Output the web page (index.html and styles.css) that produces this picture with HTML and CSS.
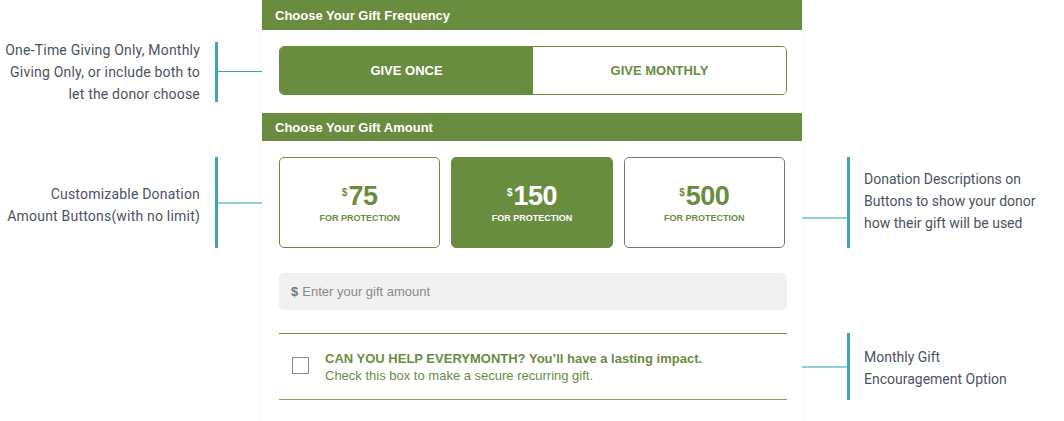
FILE: index.html
```html
<!DOCTYPE html>
<html lang="en">
<head>
<meta charset="utf-8">
<title>Donation form annotations</title>
<link rel="stylesheet" href="styles.css">
</head>
<body>
<div class="page">
  <div class="panel"></div>

  <div class="form-header row-1">Choose Your Gift Frequency</div>

  <div class="note note-left row-2">
    <p class="note-text">One-Time Giving Only, Monthly<br>Giving Only, or include both to<br>let the donor choose</p>
    <div class="connector conn-1">
      <span class="bar"></span><span class="line line-dark"></span>
    </div>
  </div>
  <div class="freq row-2">
    <div class="toggle">
      <div class="toggle-opt active">GIVE ONCE</div>
      <div class="toggle-opt">GIVE MONTHLY</div>
    </div>
  </div>

  <div class="form-header row-3">Choose Your Gift Amount</div>

  <div class="note note-left row-4 pad-amounts">
    <p class="note-text text-low">Customizable Donation<br>Amount Buttons(with no limit)</p>
    <div class="connector conn-2">
      <span class="bar"></span><span class="line"></span>
    </div>
  </div>
  <div class="amounts row-4">
    <div class="amount amount-outline">
      <div class="amount-value"><span class="cur">$</span>75</div>
      <div class="amount-label">FOR PROTECTION</div>
    </div>
    <div class="amount amount-active">
      <div class="amount-value"><span class="cur">$</span>150</div>
      <div class="amount-label">FOR PROTECTION</div>
    </div>
    <div class="amount amount-gray">
      <div class="amount-value"><span class="cur">$</span>500</div>
      <div class="amount-label">FOR PROTECTION</div>
    </div>
  </div>
  <div class="note note-right row-4 pad-amounts">
    <div class="connector conn-2 conn-low">
      <span class="line"></span><span class="bar"></span>
    </div>
    <p class="note-text text-high">Donation Descriptions on<br>Buttons to show your donor<br>how their gift will be used</p>
  </div>

  <div class="custom row-5">
    <div class="custom-input"><b>$</b> Enter your gift amount</div>
  </div>

  <div class="monthly row-6">
    <div class="monthly-box">
      <span class="checkbox"></span>
      <div class="monthly-text">
        <div class="monthly-title">CAN YOU HELP EVERYMONTH? You’ll have a lasting impact.</div>
        <div>Check this box to make a secure recurring gift.</div>
      </div>
    </div>
  </div>
  <div class="note note-right row-6 pad-monthly">
    <div class="connector conn-4">
      <span class="line"></span><span class="bar"></span>
    </div>
    <p class="note-text">Monthly Gift<br>Encouragement Option</p>
  </div>

  <div class="tail row-7"></div>
</div>
</body>
</html>
```

FILE: styles.css
```css
* { box-sizing: border-box; }

html, body {
  margin: 0;
  padding: 0;
  background: #ffffff;
}

body {
  font-family: "Liberation Sans", Arial, sans-serif;
  overflow: hidden;
}

.page {
  display: grid;
  grid-template-columns: 262px 540px 262px;
  grid-template-rows: 30px 83px 28px auto auto auto 30px;
  width: 1064px;
}

.panel {
  grid-column: 2;
  grid-row: 1 / -1;
  background: #ffffff;
  box-shadow: 0 0 6px rgba(0, 0, 0, 0.035);
}

.row-1 { grid-row: 1; }
.row-2 { grid-row: 2; }
.row-3 { grid-row: 3; }
.row-4 { grid-row: 4; }
.row-5 { grid-row: 5; }
.row-6 { grid-row: 6; }
.row-7 { grid-row: 7; }

.form-header,
.freq,
.amounts,
.custom,
.monthly,
.tail {
  grid-column: 2;
}

.form-header {
  background: #698d3f;
  color: #ffffff;
  font-weight: bold;
  font-size: 13px;
  display: flex;
  align-items: center;
  padding-left: 13px;
}

/* frequency toggle */
.freq {
  padding: 16px 15px 0 17px;
}

.toggle {
  display: flex;
  height: 49px;
  border: 1px solid #698d3f;
  border-radius: 5px;
  overflow: hidden;
}

.toggle-opt {
  flex: 1;
  display: flex;
  align-items: center;
  justify-content: center;
  font-size: 13px;
  font-weight: bold;
  color: #698d3f;
  background: #ffffff;
}

.toggle-opt.active {
  background: #698d3f;
  color: #ffffff;
}

/* amounts */
.amounts {
  display: flex;
  gap: 11px;
  padding: 16px 17px 0 17px;
}

.amount {
  flex: 1;
  height: 91px;
  border-radius: 5px;
  display: flex;
  flex-direction: column;
  align-items: center;
  justify-content: center;
  color: #698d3f;
  border: 1px solid #698d3f;
  background: #ffffff;
  padding-bottom: 4px;
}

.amount-gray { border-color: #777777; }

.amount-active {
  background: #698d3f;
  color: #ffffff;
}

.amount-value {
  font-size: 27px;
  font-weight: bold;
  line-height: 30px;
  letter-spacing: -0.5px;
}

.cur {
  font-size: 10px;
  vertical-align: 9px;
  margin-right: 1px;
  letter-spacing: 0;
}

.amount-label {
  font-size: 9px;
  font-weight: bold;
  line-height: 12px;
  margin-top: 1px;
}

/* custom input */
.custom {
  padding: 25px 15px 0 17px;
}

.custom-input {
  height: 37px;
  background: #f1f1f1;
  border-radius: 5px;
  display: flex;
  align-items: center;
  padding-left: 12px;
  font-size: 13px;
  color: #8a8a8a;
}

.custom-input b {
  color: #777777;
  margin-right: 4px;
}

/* monthly */
.monthly {
  padding: 23px 15px 0 17px;
}

.monthly-box {
  height: 67px;
  border-top: 1px solid #698d3f;
  border-bottom: 1px solid #7f9f5c;
  display: flex;
  align-items: center;
  padding-left: 13px;
  gap: 16px;
  color: #698d3f;
  font-size: 13px;
  line-height: 17px;
}

.checkbox {
  width: 17px;
  height: 17px;
  border: 1.5px solid #8a8a8a;
  margin-top: -2px;
  flex: none;
}

.monthly-title {
  font-weight: bold;
}

/* annotations */
.note {
  display: flex;
  align-items: center;
  font-family: Roboto, "Liberation Sans", sans-serif;
  color: #4b5362;
}

.note-left {
  grid-column: 1;
  justify-content: flex-end;
}

.note-right {
  grid-column: 3;
  justify-content: flex-start;
}

.note-text {
  margin: 0;
  font-size: 14px;
  line-height: 22px;
}

.note-left .note-text {
  text-align: right;
  margin-right: 15px;
  letter-spacing: 0.2px;
}

.note-right .note-text {
  margin-left: 14px;
}

.pad-amounts {
  padding-top: 16px;
  align-items: flex-start;
}

.pad-amounts .note-text {
  align-self: center;
}

.pad-amounts .text-low { margin-top: 4px; }
.pad-amounts .text-high { margin-bottom: 4px; }

.pad-monthly {
  padding-top: 23px;
  align-items: flex-start;
}

.pad-monthly .note-text {
  align-self: center;
  margin-top: 2px;
}

.connector {
  display: flex;
  align-items: center;
  flex: none;
}

.conn-1 { height: 60px; }
.conn-2 { height: 91px; }
.conn-4 { height: 67px; }

.bar {
  width: 3px;
  align-self: stretch;
  background: #3ea6b2;
}

.line {
  width: 44px;
  height: 2px;
  background: #8fd0d8;
}

.note-right .line { width: 45px; }

.line-dark {
  height: 1px;
  background: #3f9dab;
}

.conn-low .line {
  margin-top: 30px;
}
```
